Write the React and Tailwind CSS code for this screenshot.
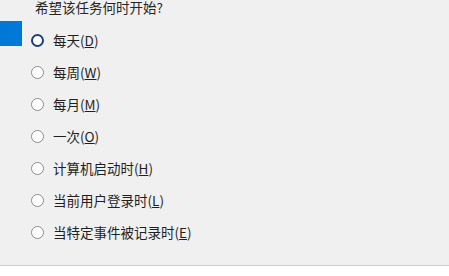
import React from "react";

const options = [
  { label: "每天", key: "D", checked: true },
  { label: "每周", key: "W" },
  { label: "每月", key: "M" },
  { label: "一次", key: "O" },
  { label: "计算机启动时", key: "H" },
  { label: "当前用户登录时", key: "L" },
  { label: "当特定事件被记录时", key: "E" },
];

const Radio = ({ checked }) =>
  checked ? (
    <span className="w-[13px] h-[13px] rounded-full border-[2.5px] border-[#1c3f80] bg-white shrink-0" />
  ) : (
    <span className="w-[13px] h-[13px] rounded-full border border-[#8c8c8c] bg-white shrink-0" />
  );

export default function App() {
  return (
    <div
      className="w-[449px] h-[276px] flex flex-col bg-white text-[#1f1f1f] overflow-hidden"
      style={{ fontFamily: '"Noto Sans CJK SC", "Noto Sans", sans-serif' }}
    >
      <div className="flex-1 bg-[#f0f0f0] border-b border-[#cfcfcf]">
        {/* heading */}
        <div className="pl-[35px] text-[13.5px] leading-[16px] -mt-[1px] text-[#262626]">
          希望该任务何时开始?
        </div>
        <div className="flex">
          {/* selected step marker */}
          <div className="w-[22px] shrink-0">
            <div className="mt-[6px] h-[25px] bg-[#0078d7]" />
          </div>
          <ul className="mt-[9px]">
            {options.map((o) => (
              <li key={o.key} className="h-[32px] flex items-center pl-[9px] gap-[9px]">
                <Radio checked={o.checked} />
                <span className="text-[13.5px] leading-[16px]">
                  {o.label}(<span className="underline underline-offset-1">{o.key}</span>)
                </span>
              </li>
            ))}
          </ul>
        </div>
      </div>
      <div className="h-[10px]" />
    </div>
  );
}
